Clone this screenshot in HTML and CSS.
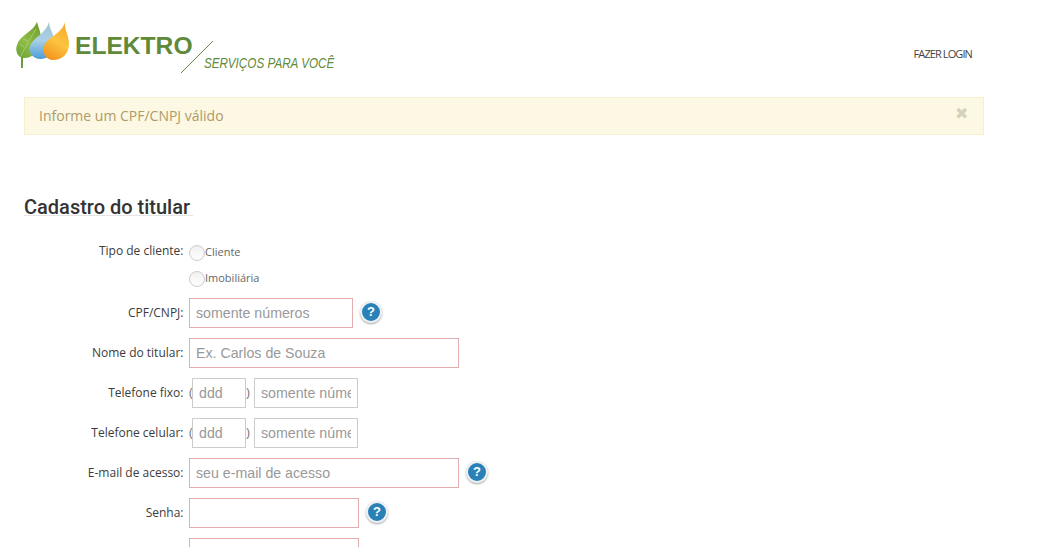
FILE: index.html
```html
<!DOCTYPE html>
<html lang="pt-BR">
<head>
<meta charset="utf-8">
<title>Elektro - Cadastro do titular</title>
<link rel="stylesheet" href="styles.css">
</head>
<body>
<header class="topbar">
  <a class="logo" href="#">
    <svg class="leaves" width="54" height="48" viewBox="0 0 54 48" aria-hidden="true">
      <defs>
        <linearGradient id="g" x1="0.8" y1="0" x2="0.2" y2="1"><stop offset="0" stop-color="#6f9f2f"/><stop offset="0.6" stop-color="#8fbc45"/><stop offset="1" stop-color="#6da63a"/></linearGradient>
        <linearGradient id="b" x1="0" y1="0" x2="0" y2="1"><stop offset="0" stop-color="#9cc4cf"/><stop offset="0.5" stop-color="#a9d0e6"/><stop offset="1" stop-color="#4b9cd8"/></linearGradient>
        <linearGradient id="o" x1="0.7" y1="0" x2="0.3" y2="1"><stop offset="0" stop-color="#f7a928"/><stop offset="0.5" stop-color="#fcc440"/><stop offset="1" stop-color="#f3941c"/></linearGradient>
      </defs>
      <path d="M6 47V33" stroke="#6d9a44" stroke-width="2" fill="none"/>
      <path d="M21 1C23 8 26 14 25 22C23 31 15 38 7 37C1 36-1 29 1 24C4 14 17 11 21 1Z" fill="url(#g)"/>
      <path d="M5 35C9 26 14 18 20 8M8 26L4 23M12 20L7 18" stroke="#b5d37e" stroke-width=".7" fill="none"/>
      <path d="M33 1C33 8 39 14 39 23C39 32 32 38 24 38C17 38 12 31 14 25C17 16 30 13 33 1Z" fill="url(#b)"/>
      <path d="M49 1C48 8 53 14 53 23C53 33 46 39 37 39C30 39 26 32 28 25C31 16 46 13 49 1Z" fill="url(#o)"/>
    </svg>
    <span class="brand">ELEKTRO</span>
    <svg class="slash" width="34" height="34" viewBox="0 0 34 34" aria-hidden="true"><path d="M0 32L32 0" stroke="#6f8a4e" stroke-width="1" fill="none"/></svg>
    <span class="tagline">SERVIÇOS PARA VOCÊ</span>
  </a>
  <a class="login" href="#">FAZER LOGIN</a>
</header>

<main class="content">
  <div class="alert">
    <span>Informe um CPF/CNPJ válido</span>
    <span class="alert-close">✖</span>
  </div>

  <h1 class="title"><span>Cadastro do titular</span></h1>

  <form class="form">
    <div class="row row-radio">
      <span class="label">Tipo de cliente:</span>
      <label class="radio"><span class="radio-dot"></span>Cliente</label>
    </div>
    <div class="row row-radio">
      <span class="label"></span>
      <label class="radio"><span class="radio-dot"></span>Imobiliária</label>
    </div>
    <div class="row">
      <label class="label">CPF/CNPJ:</label>
      <input class="input invalid w164" placeholder="somente números">
      <span class="help">?</span>
    </div>
    <div class="row">
      <label class="label">Nome do titular:</label>
      <input class="input invalid w270" placeholder="Ex. Carlos de Souza">
    </div>
    <div class="row">
      <label class="label">Telefone fixo:</label>
      <span class="paren open">(</span>
      <input class="input w54" placeholder="ddd">
      <span class="paren close">)</span>
      <input class="input w104" placeholder="somente números">
    </div>
    <div class="row">
      <label class="label">Telefone celular:</label>
      <span class="paren open">(</span>
      <input class="input w54" placeholder="ddd">
      <span class="paren close">)</span>
      <input class="input w104" placeholder="somente números">
    </div>
    <div class="row">
      <label class="label">E-mail de acesso:</label>
      <input class="input invalid w270" placeholder="seu e-mail de acesso">
      <span class="help">?</span>
    </div>
    <div class="row">
      <label class="label">Senha:</label>
      <input class="input invalid w170" type="password">
      <span class="help">?</span>
    </div>
    <div class="row">
      <label class="label"></label>
      <input class="input invalid w170" type="password">
    </div>
  </form>
</main>
</body>
</html>
```
FILE: styles.css
```css
* { box-sizing: border-box; }
html, body { margin: 0; height: 547px; overflow: hidden; background: #fff; }
body { font-family: "Open Sans", sans-serif; color: #333; }
a { text-decoration: none; }

.topbar { display: flex; justify-content: space-between; align-items: flex-start; height: 97px; padding: 21px 87px 0 16px; }
.logo { display: flex; position: relative; width: 330px; height: 60px; }
.leaves { flex: none; margin-right: 5px; }
.brand { font: bold 24.6px/1 "Liberation Sans", sans-serif; color: #5f8a3a; margin-top: 13px; }
.slash { position: absolute; left: 165px; top: 20px; }
.tagline { position: absolute; left: 188px; top: 35px; font: italic 14px/1 "Liberation Sans", sans-serif; color: #5f8a3a; white-space: nowrap; transform: scaleX(0.835); transform-origin: left; }
.login { font-size: 11px; line-height: 15px; color: #444; margin-top: 25px; letter-spacing: -0.9px; }

.content { padding: 0 0 0 24px; }
.alert { display: flex; justify-content: space-between; align-items: center; width: 960px; height: 38px; padding: 0 15px 2px 14px; background: #fcf8e3; border: 1px solid #f7efd0; color: #b09a68; font-size: 14px; }
.alert-close { color: #d6d1ba; font-size: 16px; line-height: 16px; margin-top: -5px; }

.title { height: 24px; margin: 59px 0 24px; font-size: 20px; font-weight: 500; line-height: 26px; color: #333; font-family: Roboto, sans-serif; }
.title span { display: block; width: max-content; border-bottom: 1px solid #e4e4e4; height: 22px; padding-right: 3px; }

.form { display: flex; flex-direction: column; margin-left: -24px; }
.row { display: flex; align-items: center; height: 30px; margin-bottom: 10px; }
.row-radio { height: 26px; margin-bottom: 0; align-items: flex-start; }
.label { width: 183.5px; flex: none; text-align: right; font-size: 12px; line-height: 18px; color: #3c3c3c; margin-right: 5.5px; }
.radio { display: flex; align-items: flex-start; font-size: 11px; line-height: 16px; color: #666; margin-top: 2px; }
.radio-dot { width: 16px; height: 16px; margin-top: 1px; border: 1px solid #ccc; border-radius: 50%; background: linear-gradient(#f0f0f0, #fff); }
.row-radio + .row-radio { margin-bottom: 4px; }

.input { height: 30px; padding: 0 6px; border: 1px solid #ccc; background: #fff; font: 14.2px "Liberation Sans", sans-serif; color: #555; outline: none; }
.input::placeholder { color: #999; opacity: 1; }
.invalid { border-color: #e4aeae; }
.w54 { width: 54px; }
.w104 { width: 104px; }
.w164 { width: 164px; }
.w170 { width: 170px; }
.w270 { width: 270px; }

.paren { font-size: 13px; color: #777; width: 3px; flex: none; margin-top: -2px; }
.close { width: 8px; }

.help { display: flex; align-items: center; justify-content: center; width: 22px; height: 22px; margin: -3px 0 0 7px; border: 2px solid #eef1f3; border-radius: 50%; background: #2a81b8; box-shadow: 0 1px 2px rgba(0,0,0,.35); color: #fff; font: bold 13px "Liberation Sans", sans-serif; }
```
